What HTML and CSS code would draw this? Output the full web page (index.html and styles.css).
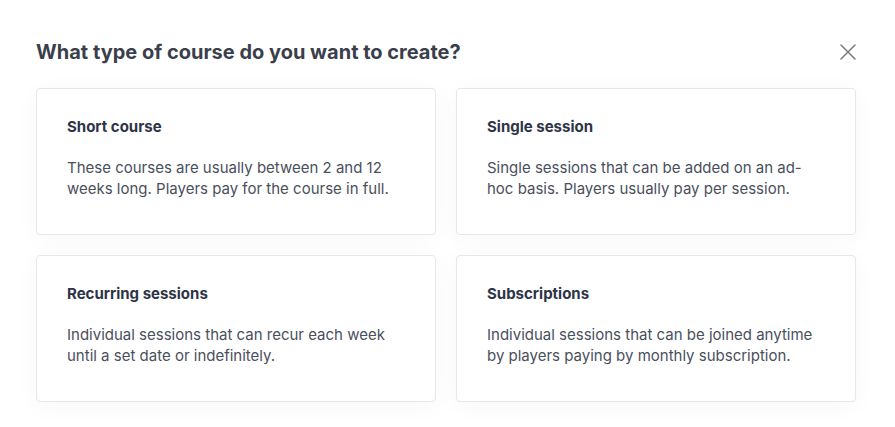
FILE: index.html
```html
<!DOCTYPE html>
<html lang="en">
<head>
<meta charset="utf-8">
<title>Create course</title>
<link rel="stylesheet" href="styles.css">
</head>
<body>
<div class="modal">
  <div class="modal-header">
    <h1 class="modal-title">What type of course do you want to create?</h1>
    <button class="close-btn" aria-label="Close">
      <svg width="16" height="16" viewBox="0 0 16 16" fill="none" stroke="#7a7a7a" stroke-width="1.5" stroke-linecap="round"><path d="M1 1L15 15M15 1L1 15"/></svg>
    </button>
  </div>
  <div class="options">
    <div class="option-card">
      <h2 class="option-title">Short course</h2>
      <p class="option-text">These courses are usually between 2 and 12 weeks long. Players pay for the course in full.</p>
    </div>
    <div class="option-card">
      <h2 class="option-title">Single session</h2>
      <p class="option-text">Single sessions that can be added on an ad-hoc basis. Players usually pay per session.</p>
    </div>
    <div class="option-card">
      <h2 class="option-title">Recurring sessions</h2>
      <p class="option-text">Individual sessions that can recur each week until a set date or indefinitely.</p>
    </div>
    <div class="option-card">
      <h2 class="option-title">Subscriptions</h2>
      <p class="option-text">Individual sessions that can be joined anytime by players paying by monthly subscription.</p>
    </div>
  </div>
</div>
</body>
</html>
```
FILE: styles.css
```css
* { box-sizing: border-box; }
html, body { margin: 0; padding: 0; background: #ffffff; }
body {
  font-family: Inter, "Noto Sans", sans-serif;
  color: #3d4350;
}
.modal {
  padding: 38px 40px 26px 36px;
}
.modal-header {
  display: flex;
  align-items: center;
  justify-content: space-between;
  height: 28px;
}
.modal-title {
  margin: 0;
  font-size: 20px;
  font-weight: 700;
  color: #3a3f4b;
}
.close-btn {
  border: 0;
  background: none;
  padding: 0;
  width: 16px;
  height: 16px;
  margin-right: -1px;
  display: flex;
  cursor: pointer;
}
.options {
  margin-top: 22px;
  display: grid;
  grid-template-columns: 400px 400px;
  column-gap: 20px;
  row-gap: 20px;
}
.option-card {
  height: 147px;
  border: 1px solid #e6e7ec;
  border-radius: 4px;
  background: #fff;
  padding: 28px 30px 0 30px;
  box-shadow: 0 4px 24px rgba(0, 0, 0, 0.035);
}
.option-title {
  margin: 0;
  font-size: 15px;
  font-weight: 700;
  line-height: 20px;
  color: #2e3447;
}
.option-text {
  margin: 20px 0 0 0;
  font-size: 15px;
  line-height: 21px;
  color: #4a4f5c;
}
```
